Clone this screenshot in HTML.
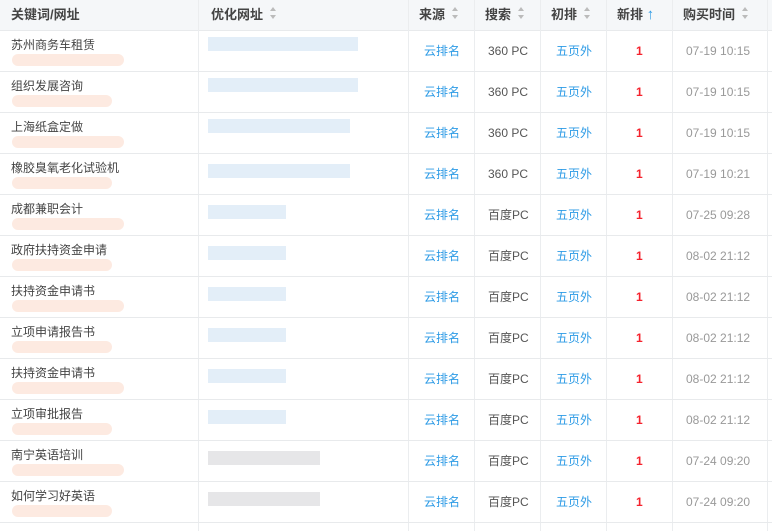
<!DOCTYPE html>
<html><head><meta charset="utf-8"><style>
*{margin:0;padding:0;box-sizing:border-box}
html,body{width:772px;height:531px;overflow:hidden}
body{background:#fff;font-family:"Liberation Sans","Noto Sans CJK SC",sans-serif;font-size:12px;color:#555;position:relative}
.hd{position:absolute;left:0;top:0;width:772px;height:31px;background:#f5f7f9;border-bottom:1px solid #e8eaec}
.vl{position:absolute;top:0;width:1px;height:531px;background:#ebedef}
.hl{position:absolute;left:0;width:772px;height:1px;background:#e8eaec}
.t{position:absolute;white-space:nowrap;line-height:16px;height:16px}
.h{font-weight:bold;color:#444;font-size:13px;top:7px}
.ar{display:inline-block;width:8px;height:14px;vertical-align:-2px;margin-left:6px;position:relative}
.ar:before{content:"";position:absolute;left:1px;top:0;border:3px solid transparent;border-bottom:4px solid #bbb;border-top:0}
.ar:after{content:"";position:absolute;left:1px;top:8px;border:3px solid transparent;border-top:4px solid #bbb;border-bottom:0}
.blue{color:#2d9be6}
.red{color:#f5222d;font-weight:bold}
.gray{color:#999}
.pk{position:absolute;height:12px;background:#fde6dc;border-radius:6px;opacity:.85}
.bl{position:absolute;height:14px;background:#e3eef8}
.gy{position:absolute;height:14px;background:#e6e6e8}
</style></head><body>
<div class="hd"></div>
<div class="vl" style="left:198px"></div><div class="vl" style="left:408px"></div><div class="vl" style="left:474px"></div><div class="vl" style="left:540px"></div><div class="vl" style="left:606px"></div><div class="vl" style="left:672px"></div><div class="vl" style="left:767px"></div>
<div class="t h" style="left:11px">关键词/网址</div>
<div class="t h" style="left:211px">优化网址<span class="ar"></span></div>
<div class="t h" style="left:419px">来源<span class="ar"></span></div>
<div class="t h" style="left:485px">搜索<span class="ar"></span></div>
<div class="t h" style="left:551px">初排<span class="ar"></span></div>
<div class="t h" style="left:617px">新排 <span style="color:#2d9be6;font-size:15px">↑</span></div>
<div class="t h" style="left:683px">购买时间<span class="ar"></span></div>
<div id="rows"></div>
<script>
var d=[["苏州商务车租赁","360 PC","07-19 10:15"],["组织发展咨询","360 PC","07-19 10:15"],["上海纸盒定做","360 PC","07-19 10:15"],["橡胶臭氧老化试验机","360 PC","07-19 10:21"],["成都兼职会计","百度PC","07-25 09:28"],["政府扶持资金申请","百度PC","08-02 21:12"],["扶持资金申请书","百度PC","08-02 21:12"],["立项申请报告书","百度PC","08-02 21:12"],["扶持资金申请书","百度PC","08-02 21:12"],["立项审批报告","百度PC","08-02 21:12"],["南宁英语培训","百度PC","07-24 09:20"],["如何学习好英语","百度PC","07-24 09:20"]];
var h="";
d.forEach(function(r,i){var y=31+i*41;
h+='<div class="hl" style="top:'+(y+40)+'px"></div>';
h+='<div class="t" style="left:11px;top:'+(y+6)+'px;color:#444">'+r[0]+'</div>';
h+='<div class="pk" style="left:12px;top:'+(y+23)+'px;width:'+(i%2?100:112)+'px"></div>';
h+='<div class="'+(i>=10?'gy':'bl')+'" style="left:208px;top:'+(y+(i<3?6:10))+'px;width:'+(i<2?150:(i<4?142:(i<10?78:112)))+'px"></div>';
var c=y+12;
h+='<div class="t blue" style="left:424px;top:'+c+'px">云排名</div>';
h+='<div class="t" style="left:488px;top:'+c+'px">'+r[1]+'</div>';
h+='<div class="t blue" style="left:556px;top:'+c+'px">五页外</div>';
h+='<div class="t red" style="left:636px;top:'+c+'px">1</div>';
h+='<div class="t gray" style="left:686px;top:'+c+'px">'+r[2]+'</div>';});
document.getElementById("rows").innerHTML=h;
</script>
</body></html>
